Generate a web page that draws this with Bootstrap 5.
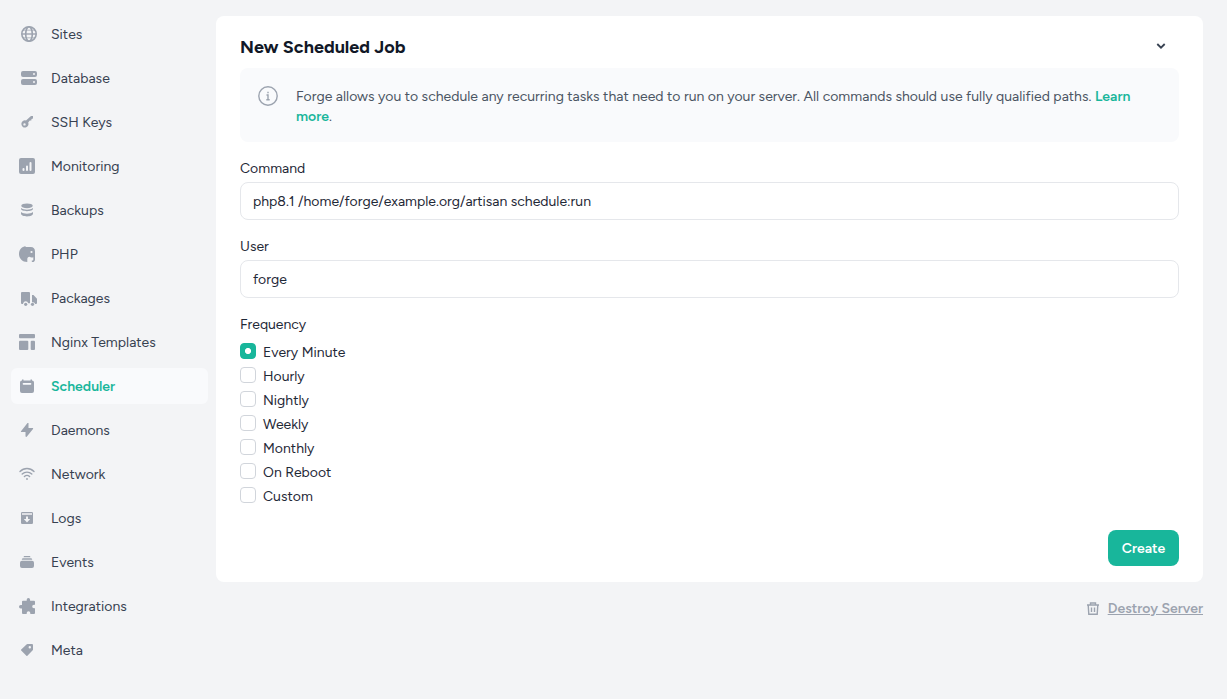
<!DOCTYPE html>
<html lang="en">
<head>
<meta charset="utf-8">
<meta name="viewport" content="width=device-width, initial-scale=1">
<title>Scheduler</title>
<link href="https://cdn.jsdelivr.net/npm/bootstrap@5.3.0/dist/css/bootstrap.min.css" rel="stylesheet">
<style>
:root{--brand:#18b69b;--muted:#9ca3af}
body{background:#f3f4f6;font-family:Figtree,Lato,sans-serif;font-size:14px;line-height:20px;color:#1f2937;letter-spacing:.015px}
.page{min-height:699px;padding:16px 24px 0 11px}
.side{width:197px;margin-right:8px}
.side .nav-link{height:36px;padding:0 8px;border-radius:6px;color:#374151}
.side .nav-link span{padding-top:2px}
.side .nav-link svg{width:20px;height:20px;margin-right:12px;fill:var(--muted);flex:none}
.side .nav-link.active{background:#f9fafc;color:var(--brand);font-weight:600}
.panel{height:566px;padding:0 24px 16px;border:0;border-radius:8px}
.panel-top{height:52px;padding:10px 12px 0 0}
h1{font-size:18px;line-height:26px;font-weight:700;color:#111827}
.note{background:#f9fafc;border-radius:8px;height:74px;padding:18px 16px 0 18px;color:#4b5563}
.note svg{margin-right:18px}
.note div{padding-top:1px}
.note a{color:var(--brand);font-weight:600;text-decoration:none}
.form-label,.freq-title{line-height:20px;padding-top:1px}
.form-label{margin-bottom:3px}
.freq-title{margin-bottom:7px}
.form-control{height:38px;padding:0 12px;border-color:#e5e7eb;border-radius:8px;font-size:inherit;color:#1f2937}
.form-check{min-height:24px;height:24px;padding-left:23px}
.form-check .form-check-input{width:16px;height:16px;margin:1px 0 0 -23px;border-color:#d1d5db;border-radius:4px}
.form-check .form-check-input:checked{background-color:var(--brand);border-color:var(--brand);background-image:radial-gradient(circle,#fff 2.700px,transparent 3.400px)}
.form-check-label{padding-top:1px;vertical-align:top}
.btn-create{width:71px;height:36px;padding:0;border-radius:8px;background:var(--brand);color:#fff;font-size:inherit;font-weight:600}
.btn-create:hover{background:#159f88;color:#fff}
.destroy{color:var(--muted);font-weight:600;padding-top:1px}
</style>
</head>
<body>
<div class="page d-flex align-items-start">
<nav class="side nav flex-column flex-shrink-0 gap-2">
<a class="nav-link d-flex align-items-center" href="#"><svg viewBox="0 0 20 20"><g fill="none" stroke="#9ca3af" stroke-width="1.6"><circle cx="10" cy="10" r="7.2"/><ellipse cx="10" cy="10" rx="3.3" ry="7.2"/><path d="M3 10h14" stroke-width="1.4"/><path d="M4 6.200h12M4 13.800h12" stroke-width=".7"/></g></svg><span>Sites</span></a>
<a class="nav-link d-flex align-items-center" href="#"><svg viewBox="0 0 20 20"><path fill-rule="evenodd" d="M4 3h12a2 2 0 0 1 2 2v2a2 2 0 0 1-2 2H4a2 2 0 0 1-2-2V5a2 2 0 0 1 2-2zm11 2a1 1 0 1 0 0 2 1 1 0 0 0 0-2zM4 11h12a2 2 0 0 1 2 2v2a2 2 0 0 1-2 2H4a2 2 0 0 1-2-2v-2a2 2 0 0 1 2-2zm11 2a1 1 0 1 0 0 2 1 1 0 0 0 0-2z"/></svg><span>Database</span></a>
<a class="nav-link d-flex align-items-center" href="#"><svg viewBox="0 0 20 20"><path fill-rule="evenodd" d="M12 4h2v2.600l-1.500.3-.2 1.600-1.500.1-1.600 1.800a3.600 3.600 0 1 1-2.200-1.900zM5.500 11.200a1.200 1.200 0 1 0 0 2.400 1.200 1.200 0 0 0 0-2.400z"/></svg><span>SSH Keys</span></a>
<a class="nav-link d-flex align-items-center" href="#"><svg viewBox="0 0 20 20"><rect y="2" width="16" height="16" rx="2"/><path d="M4.500 14v-1M8 14v-3.500M11.500 14V7" stroke="#f3f4f6" stroke-width="2" stroke-linecap="round"/></svg><span>Monitoring</span></a>
<a class="nav-link d-flex align-items-center" href="#"><svg viewBox="0 0 20 20"><ellipse cx="8" cy="5.800" rx="5.700" ry="2.400"/><path d="M2 8c2.500 2.200 9.500 2.200 12 0v.8c0 3.200-12 3.200-12 0zM2 12.100c2.500 2.200 9.500 2.200 12 0v1.500c0 3.800-12 3.800-12 0z"/></svg><span>Backups</span></a>
<a class="nav-link d-flex align-items-center" href="#"><svg viewBox="0 0 20 20"><path fill-rule="evenodd" d="M6 2.200l1.200.9h4.600C14.500 3.100 16 4.800 16 7.500v8.300a2.200 2.200 0 0 1-3.200 2v-1.300c1 .2 1.500-.2 1.500-1v-2.300c-1.700.4-2.700.2-3.800-.4-1.500.2-2.200 1-2.200 2.200v3C3.500 17.900 0 14.800 0 10 0 6.200 2.200 3 6 2.200zM12.500 6.900a1.100 1.100 0 1 0 0 2.200 1.100 1.100 0 0 0 0-2.200z"/></svg><span>PHP</span></a>
<a class="nav-link d-flex align-items-center" href="#"><svg viewBox="0 0 20 20"><path d="M3 4h7a1 1 0 0 1 1 1v10.200H9.200a2.600 2.600 0 0 0-5 0L4 16H3a1 1 0 0 1-1-1V5a1 1 0 0 1 1-1zM13 7h1.500l3.500 3.800V15a1 1 0 0 1-1 1h-.8a2.600 2.600 0 0 0-3.200-1.700z"/><circle cx="6.700" cy="16.300" r="1.600"/><circle cx="13.500" cy="16.300" r="1.600"/></svg><span>Packages</span></a>
<a class="nav-link d-flex align-items-center" href="#"><svg viewBox="0 0 20 20"><rect y="2" width="16" height="4.300" rx="1"/><rect y="8.700" width="9.300" height="9.300" rx="1"/><rect x="11.700" y="8.700" width="4.300" height="9.300" rx="1"/></svg><span>Nginx Templates</span></a>
<a class="nav-link active d-flex align-items-center" href="#"><svg viewBox="0 0 20 20"><path fill-rule="evenodd" d="M3 3.500h1.500v1h7v-1H13v1.100a2 2 0 0 1 2 2V15a2 2 0 0 1-2 2H3a2 2 0 0 1-2-2V6.600a2 2 0 0 1 2-2zM4.500 7a.8.8 0 0 0 0 1.700h7a.8.8 0 0 0 0-1.700z"/></svg><span>Scheduler</span></a>
<a class="nav-link d-flex align-items-center" href="#"><svg viewBox="0 0 20 20"><path d="M9.500 3v5h4.200c.5 0 .6.500.3.900L7.500 17l-1-.5V12H2.400c-.5 0-.7-.4-.4-.8L8.500 3z"/></svg><span>Daemons</span></a>
<a class="nav-link d-flex align-items-center" href="#"><svg viewBox="0 0 20 20"><g fill="none" stroke="#9ca3af" stroke-width="1.400" stroke-linecap="round"><path d="M1 7.500c4-4 10-4 14 0M3.200 10.100c2.800-2.700 6.800-2.700 9.600 0M5.400 12.600c1.600-1.500 3.600-1.500 5.200 0"/></g><circle cx="8" cy="15" r=".9"/></svg><span>Network</span></a>
<a class="nav-link d-flex align-items-center" href="#"><svg viewBox="0 0 20 20"><rect x="2" y="4" width="12" height="12" rx="1.300"/><path d="M3 5.200h10v1.600H3zM7 8.500h2v2.500h2.200L8 14.400 4.800 11H7z" fill="#f3f4f6"/></svg><span>Logs</span></a>
<a class="nav-link d-flex align-items-center" href="#"><svg viewBox="0 0 20 20"><path d="M5 4h6l.5 1.200h-7zM3.500 6.300h9l.8 1.400H2.700zM3 8.700h10a2 2 0 0 1 2 2V14a2 2 0 0 1-2 2H3a2 2 0 0 1-2-2v-3.300a2 2 0 0 1 2-2z"/></svg><span>Events</span></a>
<a class="nav-link d-flex align-items-center" href="#"><svg viewBox="0 0 20 20"><path d="M7.700 3.700a1.700 1.700 0 0 1 3.400 0v1H15a1 1 0 0 1 1 1v3h-1a1.800 1.800 0 0 0 0 3.600h1V17a1 1 0 0 1-1 1h-3.700v-1a1.800 1.800 0 0 0-3.600 0v1H4a1 1 0 0 1-1-1v-4.500H1.700a1.700 1.700 0 0 1 0-3.400H3V5.700a1 1 0 0 1 1-1h3.700z"/></svg><span>Integrations</span></a>
<a class="nav-link d-flex align-items-center" href="#"><svg viewBox="0 0 20 20"><path fill-rule="evenodd" d="M8.500 4H13a1 1 0 0 1 1 1v4.500a1 1 0 0 1-.3.700l-5.300 5.500a.7.7 0 0 1-1 0L2.200 10.500a.7.7 0 0 1 0-1l5.600-5.200A1 1 0 0 1 8.500 4zM10.800 6.100a1.200 1.200 0 1 0 0 2.400 1.200 1.200 0 0 0 0-2.400z"/></svg><span>Meta</span></a>
</nav>
<main class="flex-grow-1">
<section class="card panel">
<div class="panel-top d-flex justify-content-between"><h1 class="mb-0 pt-2">New Scheduled Job</h1><svg width="12" height="40" viewBox="0 0 12 40" fill="none" stroke="#374151" stroke-width="1.800"><path d="M2.300 18 6 21.700 9.700 18"/></svg></div>
<div class="note d-flex align-items-start"><svg class="flex-shrink-0" width="20" height="20" viewBox="0 0 20 20" fill="none" stroke="#9ca3af" stroke-width="1.400"><circle cx="10" cy="10" r="9.200"/><path d="M8.500 9H10v4.500M8.300 13.700h3.400M10 5.800v1.500"/></svg><div>Forge allows you to schedule any recurring tasks that need to run on your server. All commands should use fully qualified paths. <a href="#">Learn<br>more</a>.</div></div>
<form>
<label class="form-label d-block mt-3" for="cmd">Command</label>
<input id="cmd" class="form-control" value="php8.1 /home/forge/example.org/artisan schedule:run">
<label class="form-label d-block mt-3" for="usr">User</label>
<input id="usr" class="form-control" value="forge">
<div class="freq-title mt-3">Frequency</div>
<div>
<div class="form-check mb-0"><input class="form-check-input" type="radio" name="f" id="f1" checked><label class="form-check-label" for="f1">Every Minute</label></div>
<div class="form-check mb-0"><input class="form-check-input" type="radio" name="f" id="f2"><label class="form-check-label" for="f2">Hourly</label></div>
<div class="form-check mb-0"><input class="form-check-input" type="radio" name="f" id="f3"><label class="form-check-label" for="f3">Nightly</label></div>
<div class="form-check mb-0"><input class="form-check-input" type="radio" name="f" id="f4"><label class="form-check-label" for="f4">Weekly</label></div>
<div class="form-check mb-0"><input class="form-check-input" type="radio" name="f" id="f5"><label class="form-check-label" for="f5">Monthly</label></div>
<div class="form-check mb-0"><input class="form-check-input" type="radio" name="f" id="f6"><label class="form-check-label" for="f6">On Reboot</label></div>
<div class="form-check mb-0"><input class="form-check-input" type="radio" name="f" id="f7"><label class="form-check-label" for="f7">Custom</label></div>
</div>
</form>
<div class="mt-auto text-end"><button class="btn btn-create" type="button">Create</button></div>
</section>
<div class="d-flex justify-content-end align-items-center mt-3"><svg class="me-2" width="14" height="16" viewBox="0 0 14 16" fill="none" stroke="#9ca3af" stroke-width="1.400"><path d="M1 4h12M4.500 4V2h5v2M2.200 4l.6 9.300h8.400L11.800 4M5.500 6.500v4.500M8.500 6.500v4.500"/></svg><a class="destroy" href="#">Destroy Server</a></div>
</main>
</div>
<script src="https://cdn.jsdelivr.net/npm/bootstrap@5.3.0/dist/js/bootstrap.bundle.min.js"></script>
</body>
</html>
